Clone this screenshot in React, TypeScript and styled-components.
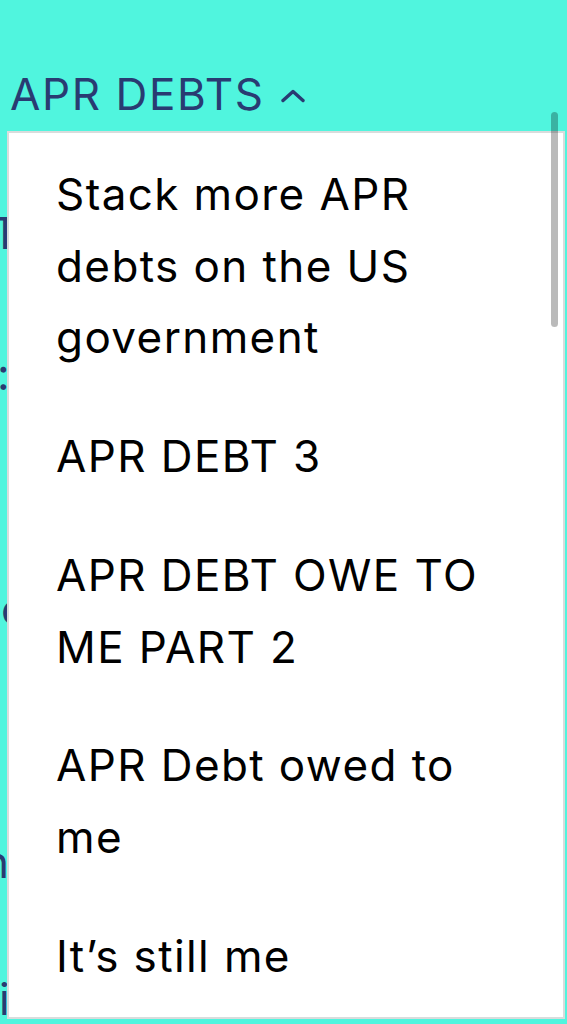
import React from "react";
import styled, { createGlobalStyle } from "styled-components";

const GlobalStyle = createGlobalStyle`
  html, body {
    margin: 0;
    padding: 0;
    background: #50f5de;
  }
  body {
    font-family: "Inter", "Noto Sans", sans-serif;
  }
`;

const Page = styled.div`
  position: relative;
  width: 567px;
  height: 1024px;
  overflow: hidden;
  padding-top: 72px;
  box-sizing: border-box;
  background: #50f5de;
`;

const TitleRow = styled.div`
  display: flex;
  align-items: center;
  padding-left: 10px;
  height: 44px;
`;

const Title = styled.h1`
  margin: 0;
  font-size: 44px;
  line-height: 44px;
  font-weight: 400;
  color: #293b72;
  letter-spacing: 1.6px;
`;

const Chevron = styled.svg`
  margin-left: 16px;
  margin-top: 4px;
  flex: none;
`;

const Backdrop = styled.div`
  display: flex;
  flex-direction: column;
`;

const Peek = styled.span<{ $gap: number; $shift: number }>`
  display: block;
  margin-top: ${(p) => p.$gap}px;
  margin-left: ${(p) => p.$shift}px;
  font-size: 44px;
  line-height: 44px;
  color: #293b72;
  white-space: nowrap;
`;

const Dropdown = styled.div`
  position: absolute;
  top: 131px;
  left: 7px;
  width: 558px;
  height: 888px;
  box-sizing: border-box;
  border: 2px solid #d9dcdc;
  background: #ffffff;
  overflow: hidden;
`;

const OptionList = styled.ul`
  list-style: none;
  margin: 0;
  padding: 2px 0 0;
`;

const Option = styled.li`
  padding: 24px 50px 23px 47px;
  font-size: 44px;
  line-height: 71.7px;
  letter-spacing: 1.4px;
  color: #000000;
  cursor: pointer;
`;

const ScrollThumb = styled.div`
  position: absolute;
  top: 112px;
  left: 551px;
  width: 7px;
  height: 215px;
  border-radius: 4px;
  background: rgba(0, 0, 0, 0.27);
`;

const options = [
  "Stack more APR debts on the US government",
  "APR DEBT 3",
  "APR DEBT OWE TO ME PART 2",
  "APR Debt owed to me",
  "It’s still me",
];

const peeks = [
  { text: "T", gap: 95, shift: -9 },
  { text: ":", gap: 97, shift: -3 },
  { text: "o", gap: 191, shift: 1 },
  { text: "n", gap: 209, shift: -17 },
  { text: "i", gap: 93, shift: -1 },
];

const App: React.FunctionComponent = () => (
  <Page>
    <GlobalStyle />
    <TitleRow>
      <Title>APR DEBTS</Title>
      <Chevron width="24" height="14" viewBox="0 0 24 14" fill="none">
        <polyline
          points="2,11.5 12,2.5 22,11.5"
          stroke="#293b72"
          strokeWidth="3.4"
          strokeLinecap="round"
          strokeLinejoin="round"
        />
      </Chevron>
    </TitleRow>
    <Backdrop>
      {peeks.map((p, i) => (
        <Peek key={i} $gap={p.gap} $shift={p.shift}>
          {p.text}
        </Peek>
      ))}
    </Backdrop>
    <Dropdown>
      <OptionList>
        {options.map((o) => (
          <Option key={o}>{o}</Option>
        ))}
      </OptionList>
    </Dropdown>
    <ScrollThumb />
  </Page>
);

export default App;
